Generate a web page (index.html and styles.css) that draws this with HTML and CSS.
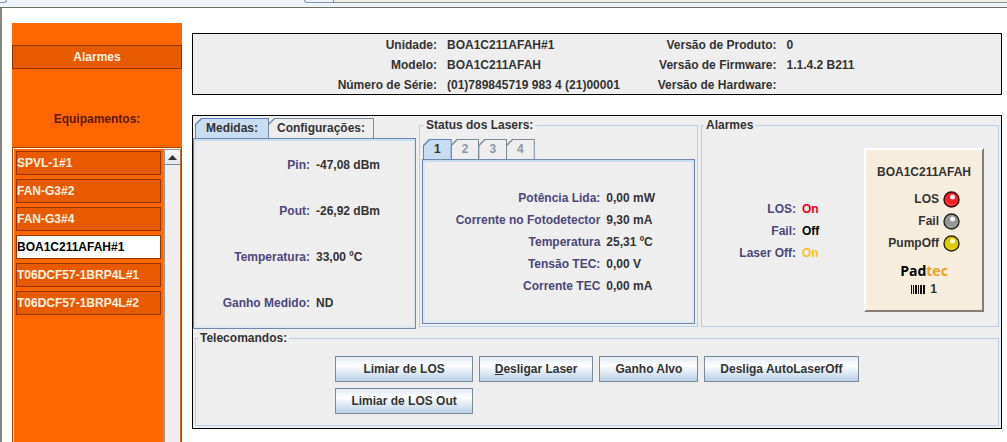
FILE: index.html
```html
<!DOCTYPE html>
<html lang="pt-BR">
<head>
<meta charset="utf-8">
<title>BOA1C211AFAH#1</title>
<link rel="stylesheet" href="styles.css">
</head>
<body>
<div class="window-edge"><span class="edge-tab edge-tab-left"></span><span class="edge-tab edge-tab-mid"></span><span class="edge-line"></span></div>
<div class="frame">
  <aside class="sidebar">
    <button class="side-button alarms-button" type="button">Alarmes</button>
    <h2 class="side-title">Equipamentos:</h2>
    <div class="device-box">
      <nav class="device-list">
        <button class="side-button device" type="button">SPVL-1#1</button>
        <button class="side-button device" type="button">FAN-G3#2</button>
        <button class="side-button device" type="button">FAN-G3#4</button>
        <button class="side-button device selected" type="button">BOA1C211AFAH#1</button>
        <button class="side-button device" type="button">T06DCF57-1BRP4L#1</button>
        <button class="side-button device" type="button">T06DCF57-1BRP4L#2</button>
      </nav>
      <div class="scrollbar">
        <button class="scroll-up" type="button" aria-label="Rolar para cima"><svg width="9" height="5" viewBox="0 0 9 5"><path d="M4.5 0L9 5H0z" fill="#333"/></svg></button>
      </div>
    </div>
  </aside>
  <main class="content">
    <section class="info">
      <dl class="info-list">
        <dt>Unidade:</dt><dd>BOA1C211AFAH#1</dd>
        <dt>Modelo:</dt><dd>BOA1C211AFAH</dd>
        <dt>Número de Série:</dt><dd>(01)789845719 983 4 (21)00001</dd>
      </dl>
      <dl class="info-list versions">
        <dt>Versão de Produto:</dt><dd>0</dd>
        <dt>Versão de Firmware:</dt><dd>1.1.4.2 B211</dd>
        <dt>Versão de Hardware:</dt><dd></dd>
      </dl>
    </section>
    <section class="board">
      <div class="board-top">
        <div class="measures">
          <div class="tabs" role="tablist">
            <button class="tab active" role="tab" aria-selected="true" type="button"><span>Medidas:</span></button>
            <button class="tab" role="tab" aria-selected="false" type="button"><span>Configurações:</span></button>
          </div>
          <div class="tab-panel" role="tabpanel">
            <dl class="readings measure-readings">
              <dt>Pin:</dt><dd>-47,08 dBm</dd>
              <dt>Pout:</dt><dd>-26,92 dBm</dd>
              <dt>Temperatura:</dt><dd>33,00 ºC</dd>
              <dt>Ganho Medido:</dt><dd>ND</dd>
            </dl>
          </div>
        </div>
        <fieldset class="group lasers">
          <legend>Status dos Lasers:</legend>
          <div class="tabs" role="tablist">
            <button class="tab small active" role="tab" aria-selected="true" type="button"><span>1</span></button>
            <button class="tab small" role="tab" aria-selected="false" type="button" disabled><span>2</span></button>
            <button class="tab small" role="tab" aria-selected="false" type="button" disabled><span>3</span></button>
            <button class="tab small" role="tab" aria-selected="false" type="button" disabled><span>4</span></button>
          </div>
          <div class="tab-panel" role="tabpanel">
            <dl class="readings laser-readings">
              <dt>Potência Lida:</dt><dd>0,00 mW</dd>
              <dt>Corrente no Fotodetector</dt><dd>9,30 mA</dd>
              <dt>Temperatura</dt><dd>25,31 ºC</dd>
              <dt>Tensão TEC:</dt><dd>0,00 V</dd>
              <dt>Corrente TEC</dt><dd>0,00 mA</dd>
            </dl>
          </div>
        </fieldset>
        <fieldset class="group alarms">
          <legend>Alarmes</legend>
          <div class="alarms-body">
            <dl class="readings alarm-readings">
              <dt>LOS:</dt><dd class="on-red">On</dd>
              <dt>Fail:</dt><dd class="off">Off</dd>
              <dt>Laser Off:</dt><dd class="on-amber">On</dd>
            </dl>
            <div class="card">
              <div class="card-title">BOA1C211AFAH</div>
              <div class="led-row">LOS <svg class="led" viewBox="0 0 17 17"><circle cx="8.5" cy="8.5" r="7.5" fill="#fb2025" stroke="#3a0808" stroke-width="1.4"/><path d="M3 10.5a6 6 0 0 0 11 0" fill="none" stroke="#ff5050"/><circle cx="9.5" cy="6" r="2.5" fill="#fff" opacity=".9"/></svg></div>
              <div class="led-row">Fail <svg class="led" viewBox="0 0 17 17"><circle cx="8.5" cy="8.5" r="7.5" fill="#969696" stroke="#222" stroke-width="1.4"/><path d="M3 10.5a6 6 0 0 0 11 0" fill="none" stroke="#a8a8a8"/><circle cx="9.5" cy="6" r="2.5" fill="#fff" opacity=".9"/></svg></div>
              <div class="led-row">PumpOff <svg class="led" viewBox="0 0 17 17"><circle cx="8.5" cy="8.5" r="7.5" fill="#dfc900" stroke="#2d2900" stroke-width="1.4"/><path d="M3 10.5a6 6 0 0 0 11 0" fill="none" stroke="#e8d830"/><circle cx="9.5" cy="6" r="2.5" fill="#fff" opacity=".9"/></svg></div>
              <div class="brand">Pad<span>tec</span></div>
              <div class="slot"><svg width="14" height="9" viewBox="0 0 14 9" shape-rendering="crispEdges"><path d="M0 0h1v9H0zM2 0h1v9H2zM4 0h2v9H4zM7 0h1v9H7zM9 0h2v9H9zM12 0h2v9h-2z" fill="#111"/></svg>1</div>
            </div>
          </div>
        </fieldset>
      </div>
      <fieldset class="group commands">
        <legend>Telecomandos:</legend>
        <div class="command-grid">
          <button class="command" type="button">Limiar de LOS</button>
          <button class="command" type="button"><u>D</u>esligar Laser</button>
          <button class="command" type="button">Ganho Alvo</button>
          <button class="command" type="button">Desliga AutoLaserOff</button>
          <button class="command" type="button">Limiar de LOS Out</button>
        </div>
      </fieldset>
    </section>
  </main>
</div>
</body>
</html>
```
FILE: styles.css
```css
* { box-sizing: border-box; }

body {
  margin: 0;
  min-height: 100vh;
  display: flex;
  flex-direction: column;
  background: #fff;
  color: #333;
  font: bold 12px/14px "Liberation Sans", Arial, sans-serif;
}

button { font: inherit; color: inherit; margin: 0; cursor: pointer; }
dl, dd { margin: 0; }

.window-edge {
  height: 8px;
  display: flex;
  background: #eef4f9;
  border-bottom: 1px solid #6e6e5e;
}
.edge-tab { height: 3px; border: 1px solid #8494ad; border-top: 0; }
.edge-tab-left { width: 7px; border-left: 0; border-bottom-right-radius: 3px; }
.edge-tab-mid { width: 30px; margin-left: 297px; border-bottom-left-radius: 3px; }
.edge-line { flex: 1; height: 3px; background: #ecefe2; border-bottom: 1px solid #8c8f8c; }

.frame {
  flex: 1;
  display: flex;
  gap: 10px;
  padding: 15px 5px 0 10px;
  border-left: 2px solid #85877d;
}

.sidebar {
  width: 170px;
  flex: none;
  display: flex;
  flex-direction: column;
  padding-top: 22px;
  background: #ff6600;
}
.side-button {
  height: 24px;
  padding: 0;
  border: 1px solid #983300;
  background: #e85a00;
  color: #fff4e2;
}
.alarms-button { flex: none; }
.side-title {
  margin: 43px 0 21px;
  font-size: 12px;
  line-height: 14px;
  text-align: center;
  color: #5c1a00;
}
.device-box {
  flex: 1;
  display: flex;
  border: 1px solid #a84300;
  border-bottom: 0;
  box-shadow: inset 1px 1px #fff0d8, inset -1px 0 #fff0d8;
}
.device-list {
  flex: 1;
  display: flex;
  flex-direction: column;
  gap: 4px;
  padding: 3px 2px 0 3px;
}
.device { text-align: left; }
.device.selected { background: #fff; color: #000; }
.scrollbar {
  width: 18px;
  margin-top: 1px;
  border: solid #9b968f;
  border-width: 1px 1px 0 2px;
  border-right-color: #d1691f;
  background: #eee;
}
.scroll-up {
  display: flex;
  align-items: center;
  justify-content: center;
  width: 100%;
  height: 15px;
  padding: 0;
  border: 0;
  border-bottom: 1px solid #7a8a99;
  background: linear-gradient(#f4f8fc, #dfe8f0);
}

.content {
  flex: 1;
  min-width: 0;
  padding-top: 10px;
}

.info {
  display: flex;
  height: 62px;
  border: 1px solid #000;
  background: #eee;
}
.info-list {
  display: grid;
  grid-template-columns: 244px 1fr;
  grid-auto-rows: 20px;
  column-gap: 10px;
  line-height: 20px;
  padding-top: 1px;
  flex: 56;
  white-space: nowrap;
}
.info-list dt, .readings dt { text-align: right; }
.versions { flex: 44; grid-template-columns: 131px 1fr; }

.board {
  margin-top: 20px;
  padding: 2px 2px 2px 0;
  border: 1px solid #000;
  background: #eee;
}
.board-top {
  display: grid;
  grid-template-columns: 223fr 279fr 298fr;
  column-gap: 3px;
}
.measures {
  display: flex;
  flex-direction: column;
  margin-bottom: -2px;
}

.tabs { display: flex; padding-left: 2px; }
.tab {
  --cut: polygon(6px 0, 100% 0, 100% 100%, 0 100%, 0 6px);
  height: 20px;
  padding: 1px 1px 0;
  margin-right: -1px;
  border: 0;
  background: #7a8a99;
  clip-path: var(--cut);
}
.tab span {
  display: block;
  height: 19px;
  padding: 0 8px;
  line-height: 18px;
  background: #eee;
  clip-path: var(--cut);
}
.tab.active { background: #6382bf; }
.tab.active span { padding: 0 10px; background: #c8ddf2; }
.tab.small span, .tab.small.active span { padding: 0 10px; }
.tab:disabled { color: #8a98a8; }

.tab-panel {
  flex: 1;
  border: 1px solid #6f87aa;
  box-shadow: inset 0 2px #c8ddf2, inset 2px 0 #dbe7f3, inset -2px -2px #dbe7f3;
}

.readings {
  display: grid;
  column-gap: 6px;
  white-space: nowrap;
}
.readings dt { color: #4c4778; }
.measure-readings {
  grid-template-columns: 116fr 99fr;
  grid-auto-rows: 46px;
  line-height: 46px;
  padding: 3px 0 2px;
}
.laser-readings {
  grid-template-columns: 178fr 88fr;
  grid-auto-rows: 22px;
  line-height: 22px;
  padding: 27px 0 26px;
}

.group {
  min-width: 0;
  margin: 0;
  padding: 0;
  border: 1px solid #b8cfe5;
}
.group legend {
  margin-left: 2px;
  padding: 0 2px;
  line-height: 14px;
}
.lasers { padding: 7px 2px 2px; }
.lasers .tabs { padding-left: 1px; }
.alarms-body {
  display: flex;
  justify-content: space-between;
  padding: 16px 14px 14px 0;
}
.alarm-readings {
  grid-template-columns: 94px 1fr;
  grid-auto-rows: 22px;
  line-height: 22px;
  padding-top: 50px;
}
.on-red { color: #f00020; }
.off { color: #000; }
.on-amber { color: #ffc21e; }

.card {
  width: 120px;
  height: 164px;
  padding-top: 15px;
  border: 2px solid;
  border-color: #fff #857d75 #857d75 #fff;
  background: #f6eddd;
}
.card-title { text-align: center; margin-bottom: 9px; }
.led-row {
  display: flex;
  align-items: center;
  justify-content: flex-end;
  gap: 4px;
  height: 22px;
  padding-right: 22px;
}
.led { width: 17px; height: 17px; }
.brand {
  margin-top: 9px;
  text-align: center;
  font: bold 14px/16px "Open Sans", "Noto Sans", sans-serif;
  color: #000;
}
.brand span { color: #f0a020; }
.slot {
  display: flex;
  align-items: center;
  justify-content: center;
  gap: 5px;
  margin-top: 3px;
}

.commands { margin: 4px 0 0 2px; }
.command-grid {
  display: grid;
  grid-template-columns: repeat(4, max-content);
  justify-content: center;
  gap: 6px;
  padding: 11px 0;
}
.command {
  height: 26px;
  padding: 0 15px;
  border: 1px solid #7a8a99;
  background: linear-gradient(#dfe9f4, #fff 35%, #eef4fa 50%, #b8cfe5);
}
```
